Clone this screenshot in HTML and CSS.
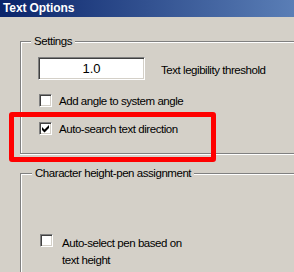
FILE: index.html
```html
<!DOCTYPE html>
<html>
<head>
  <title>Text Options</title>
  <link rel="stylesheet" href="styles.css">
</head>
<body>
  <div class="window">
    <div class="titlebar">Text Options</div>
    <div class="content">
      <fieldset class="group group-settings">
        <legend>Settings</legend>
        <div class="row">
          <input class="field" type="text" value="1.0">
          <span class="row-label">Text legibility threshold</span>
        </div>
        <label class="check check-first">
          <span class="box"></span>
          <span>Add angle to system angle</span>
        </label>
        <label class="check">
          <span class="box">
            <svg width="11" height="11" viewBox="1 1 11 11"><polygon points="3,5 5.5,7.5 10,3 10,6 5.5,10.5 3,8" fill="#000"/></svg>
          </span>
          <span>Auto-search text direction</span>
        </label>
      </fieldset>

      <fieldset class="group group-pen">
        <legend>Character height-pen assignment</legend>
        <label class="check check-wrap">
          <span class="box"></span>
          <span class="wrap-text">Auto-select pen based on text height</span>
        </label>
      </fieldset>
    </div>
    <div class="highlight"></div>
  </div>
</body>
</html>
```

FILE: styles.css
```css
html, body {
  margin: 0;
  padding: 0;
}

body {
  width: 294px;
  height: 272px;
  overflow: hidden;
  background-color: #d4d0c8;
  font-family: "Liberation Sans", Arial, sans-serif;
  font-size: 11.5px;
  letter-spacing: -0.45px;
  color: #000;
}

.window {
  position: relative;
  height: 272px;
  overflow: hidden;
}

.titlebar {
  height: 17px;
  line-height: 17px;
  padding-left: 3px;
  font-size: 12px;
  font-weight: bold;
  letter-spacing: -0.1px;
  color: #fff;
  background: linear-gradient(to right, #0a246a, #5a7eb6);
}

.content {
  padding-left: 20px;
}

.group {
  margin: 0;
  padding: 0 0 0 17px;
  border: 1px solid #808080;
  border-right: none;
  box-shadow: inset 1px 1px #fff, 0 1px #fff;
}

.group legend {
  margin-left: -7px;
  padding: 0 3px;
  line-height: 13px;
  background-color: #d4d0c8;
}

.group-settings {
  margin-top: 18px;
  padding-bottom: 18px;
}

.group-pen {
  box-sizing: border-box;
  margin-top: 13px;
  height: 105px;
  border-bottom: none;
  box-shadow: inset 1px 1px #fff;
}

.group-pen legend {
  margin-left: -6px;
}

.row {
  display: flex;
  align-items: center;
  gap: 16px;
  margin-top: 9px;
}

.field {
  box-sizing: border-box;
  width: 107px;
  height: 23px;
  padding: 0;
  font-family: inherit;
  font-size: 13px;
  letter-spacing: 0;
  text-align: center;
  background-color: #fff;
  border: 1px solid;
  border-color: #808080 #fff #fff #808080;
  box-shadow: inset 1px 1px #404040, inset -1px -1px #d4d0c8;
  outline: none;
}

.row-label {
  padding-top: 3px;
}

.check {
  display: flex;
  align-items: center;
  gap: 7px;
  height: 13px;
  margin-top: 15px;
  margin-left: 1px;
}

.check-first {
  margin-top: 14px;
}

.box {
  box-sizing: border-box;
  display: block;
  flex: none;
  width: 13px;
  height: 13px;
  background-color: #fff;
  border: 1px solid;
  border-color: #808080 #fff #fff #808080;
  box-shadow: inset 1px 1px #404040, inset -1px -1px #d4d0c8;
}

.box svg {
  display: block;
}

.check-wrap {
  align-items: flex-start;
  height: auto;
  margin-top: 54px;
  margin-left: 2px;
  gap: 9px;
}

.wrap-text {
  width: 128px;
  line-height: 17px;
  margin-top: 1px;
}

.highlight {
  position: absolute;
  left: 9px;
  top: 112px;
  width: 197px;
  height: 40px;
  border: 5px solid #ff0000;
  border-radius: 3px;
}
```
